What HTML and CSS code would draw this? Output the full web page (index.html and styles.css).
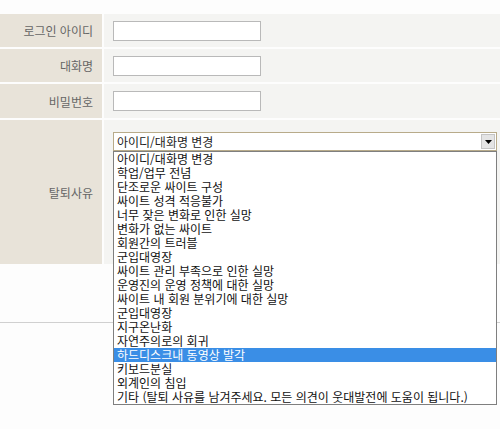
FILE: index.html
```html
<!DOCTYPE html>
<html lang="ko">
<head>
  <meta charset="UTF-8" />
  <title>회원탈퇴</title>
  <link rel="stylesheet" href="styles.css">
</head>
<body>

  <div class="page">
    <div class="form-table">
      <div class="label">로그인 아이디</div>
      <div class="field"><input type="text" class="text-input" /></div>

      <div class="label">대화명</div>
      <div class="field"><input type="text" class="text-input" /></div>

      <div class="label">비밀번호</div>
      <div class="field"><input type="password" class="text-input" /></div>

      <div class="label reason-label">탈퇴사유</div>
      <div class="field reason-field">
        <div class="select-wrap">
          <div class="select-box">
            <span>아이디/대화명 변경</span>
            <span class="select-arrow"><svg width="7" height="4" viewBox="0 0 7 4"><path d="M0 0h7L3.5 4z" fill="#000"/></svg></span>
          </div>
          <ul class="select-list">
            <li>아이디/대화명 변경</li>
            <li>학업/업무 전념</li>
            <li>단조로운 싸이트 구성</li>
            <li>싸이트 성격 적응불가</li>
            <li>너무 잦은 변화로 인한 실망</li>
            <li>변화가 없는 싸이트</li>
            <li>회원간의 트러블</li>
            <li>군입대영장</li>
            <li>싸이트 관리 부족으로 인한 실망</li>
            <li>운영진의 운영 정책에 대한 실망</li>
            <li>싸이트 내 회원 분위기에 대한 실망</li>
            <li>군입대영장</li>
            <li>지구온난화</li>
            <li>자연주의로의 회귀</li>
            <li class="selected">하드디스크내 동영상 발각</li>
            <li>키보드분실</li>
            <li>외계인의 침입</li>
            <li>기타 (탈퇴 사유를 남겨주세요. 모든 의견이 웃대발전에 도움이 됩니다.)</li>
          </ul>
        </div>
      </div>
    </div>

    <div class="divider"></div>
  </div>

</body>
</html>
```

FILE: styles.css
```css
body {
  margin: 0;
  background: #fdfdfd;
  font-family: "Noto Sans CJK KR", "Noto Sans", sans-serif;
  font-size: 12px;
  color: #000;
}

.page {
  height: 429px;
}

.form-table {
  position: relative;
  z-index: 2;
  display: grid;
  grid-template-columns: 102px 1fr;
  grid-template-rows: 33px 33px 34px 144px;
  gap: 2px;
  padding-top: 14px;
}

.label {
  background: #e8e3d9;
  color: #666;
  padding-right: 9px;
  display: flex;
  align-items: center;
  justify-content: flex-end;
}

.field {
  background: #f4f4f2;
  padding-left: 9px;
  display: flex;
  align-items: center;
}

.text-input {
  box-sizing: border-box;
  width: 148px;
  height: 20px;
  border: 1px solid #b9b9b9;
  background: #fff;
  margin: 0;
}

.reason-field {
  align-items: flex-start;
  padding-top: 12px;
}

.select-wrap {
  position: relative;
  width: 384px;
}

.select-box {
  box-sizing: border-box;
  height: 19px;
  border: 1px solid #b8ab8a;
  background: #fff;
  display: flex;
  align-items: center;
  justify-content: space-between;
  padding-left: 3px;
  line-height: 14px;
  color: #222;
}

.select-arrow {
  width: 14px;
  height: 15px;
  margin-right: 1px;
  background: #e4e4e4;
  border: 1px solid #c4c4c4;
  box-sizing: border-box;
  display: flex;
  align-items: center;
  justify-content: center;
}

.select-list {
  position: absolute;
  top: 19px;
  left: 0;
  width: 384px;
  box-sizing: border-box;
  margin: 0;
  padding: 0;
  list-style: none;
  background: #fff;
  border: 1px solid #7f7f7f;
  z-index: 10;
}

.select-list li {
  height: 14px;
  line-height: 14px;
  padding-left: 3px;
  color: #111;
  white-space: nowrap;
  overflow: visible;
}

.select-list li.selected {
  background: #3a8ee6;
  color: #fff;
}

.divider {
  position: relative;
  z-index: 1;
  border-top: 1px solid #d0d0d0;
  margin-top: 58px;
}
```
